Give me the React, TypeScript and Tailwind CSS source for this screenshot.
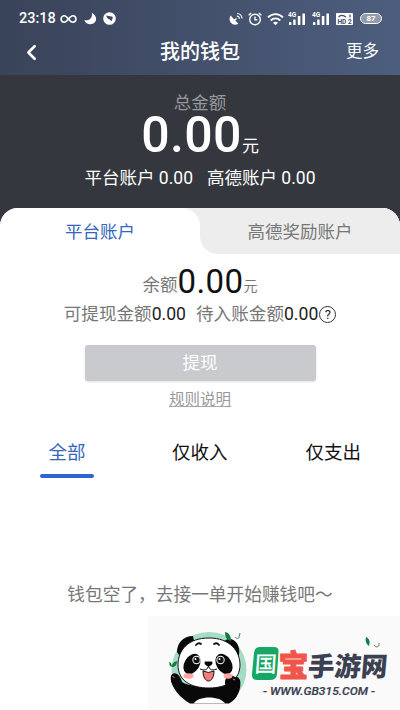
import { ChevronLeft } from 'lucide-react'

const cjk = "font-['Roboto','Noto_Sans_CJK_SC',sans-serif]"

function SignalBars() {
  return (
    <svg width="18" height="14" viewBox="0 0 18 14" fill="#fff">
      <text x="0" y="5.2" fontSize="6.5" fontWeight="700">4G</text>
      <rect x="1" y="10" width="2.4" height="3" rx="0.5" />
      <rect x="5.2" y="7.5" width="2.4" height="5.5" rx="0.5" />
      <rect x="9.8" y="4" width="2.6" height="9" rx="0.5" />
      <rect x="14.4" y="1.5" width="2.6" height="11.5" rx="0.5" />
    </svg>
  )
}

function StatusBar() {
  return (
    <div className="flex h-[35px] items-center pl-[19px] pr-[18px] pt-0.5 text-white">
      <span className="w-[37px] pt-px text-[14.5px] font-medium leading-none">23:18</span>
      <svg className="ml-1" width="18" height="12" viewBox="0 0 18 12" fill="none" stroke="#fff" strokeWidth="1.6">
        <path d="M8.5 6C6.7 3.7 5.8 2.8 4.3 2.8a3.2 3.2 0 0 0 0 6.4C7.4 9.2 9.6 2.8 12.7 2.8a3.2 3.2 0 0 1 0 6.4C11.2 9.2 10.3 8.3 8.5 6" />
      </svg>
      <svg className="ml-[6px]" width="13" height="13" viewBox="0 0 13 13" fill="#fff">
        <path d="M7.8.7c7 4.2 4.7 11.5-1.3 11.5C3.5 12.2 1.3 10.6.3 8.2 5.5 9 8.8 5.8 7.8.7z" />
      </svg>
      <svg className="ml-[6px]" width="13" height="13" viewBox="0 0 13 13">
        <circle cx="6.5" cy="6.5" r="6.3" fill="#fff" />
        <path d="M3 3.5l6.8 1.2-.5 2.8-.8 1.8-1.5-1.5-2.3-1.3z" fill="#3d465c" />
      </svg>
      <svg className="ml-auto" width="14" height="14" viewBox="0 0 14 14" fill="#fff">
        <path d="M1.7 3.5C-.8 7 1 12.5 6 12.7c1.5 0 2.5-.4 3.3-1.2L6.3 8.7 8 7 7 6 5.2 7.4z" />
        <path d="M7.8 4a3 3 0 0 1 2.7 2.8M8 1.5a5.2 5.2 0 0 1 5 5" fill="none" stroke="#fff" strokeWidth="1.2" />
      </svg>
      <svg className="ml-[5px]" width="14" height="14" viewBox="0 0 14 14" fill="none" stroke="#fff" strokeWidth="1.4">
        <circle cx="7" cy="7.5" r="5.3" />
        <path d="M7 4.5v3.3h2.3M.6 3.3l2.6-2.2M13.4 3.3l-2.6-2.2" />
      </svg>
      <svg className="ml-[5px]" width="17" height="14" viewBox="0 0 17 14" fill="none" stroke="#fff" strokeWidth="1.9">
        <path d="M1 5.3c4.3-4.3 10.7-4.3 15 0M3.7 8.5c2.8-2.8 6.8-2.8 9.6 0" />
        <path d="M6 10.8c1.4-1.3 3.6-1.3 5 0L8.5 13.2z" fill="#fff" stroke="none" />
      </svg>
      <div className="ml-1 flex gap-[6px]">
        <SignalBars />
        <SignalBars />
      </div>
      <svg className="ml-[6px]" width="17" height="12" viewBox="0 0 17 12">
        <rect width="17" height="12" rx="1" fill="#fff" />
        <path d="M2.5 4.2c1.5-2.5 5-2.5 7.5 0M14 1.5v3" fill="none" stroke="#414b63" strokeWidth="1.2" />
        <text x="1.5" y="10.8" fontSize="6.5" fontWeight="700" fill="#414b63">HD 2</text>
      </svg>
      <div className="ml-[7px] flex h-[11px] w-[22px] items-center justify-center rounded-full border border-white bg-[#929bac] text-[8px] font-bold leading-none">87</div>
    </div>
  )
}

function Panda() {
  return (
    <svg width="80" height="76" viewBox="0 0 80 76">
      <defs>
        <clipPath id="badge">
          <path d="M0 0h80v48C78 58 70 68 61 73.5H22C12 68 4 58 2 48z" />
        </clipPath>
      </defs>
      <g clipPath="url(#badge)">
        <circle cx="41" cy="39.5" r="37.5" fill="#a5dcc5" />
        <path d="M9 22C9 13 15 6 25 6l1 5-13 17z" fill="#090909" />
        <path d="M56 11c8-6 17 2 15 14l-3 3-14-14z" fill="#090909" />
        <path d="M3 46c2-5 9-3 11 6 9 6 41 6 44 2 1-9 10-11 14-4 2 10-4 19-10 25H20C9 67 1 56 3 46z" fill="#090909" />
        <path d="M25 75c3-10 29-10 33 0z" fill="#fff" />
        <path d="M41 8c21 0 31 13 31 27S60 58 41 58 10 50 10 35 20 8 41 8z" fill="#fff" stroke="#111" strokeWidth="1" />
        <path d="M57 53c0-7 5-10 10-6 6 3 4 11 0 15l-9-2z" fill="#090909" />
        <ellipse cx="24" cy="34" rx="7.5" ry="11" fill="#090909" transform="rotate(32 24 34)" />
        <ellipse cx="56" cy="34" rx="7.5" ry="11" fill="#090909" transform="rotate(-32 56 34)" />
        <circle cx="28.5" cy="30" r="4.2" fill="#fff" />
        <circle cx="52.5" cy="30" r="4.2" fill="#fff" />
        <circle cx="28.5" cy="30" r="3.2" fill="#111" />
        <circle cx="52.5" cy="30" r="3.2" fill="#111" />
        <circle cx="27.5" cy="29" r="1" fill="#fff" />
        <circle cx="51.5" cy="29" r="1" fill="#fff" />
        <path d="M28 15q2.500-3 5-1M46 14q3-2 5 1" fill="none" stroke="#111" strokeWidth="1.8" strokeLinecap="round" />
        <ellipse cx="20.5" cy="46" rx="5" ry="2.8" fill="#ffa6a0" />
        <ellipse cx="60" cy="46" rx="4.5" ry="2.8" fill="#ffa6a0" />
        <path d="M35 41q5.500 3 11 0c0 6-2.500 10-5.500 10S35 47 35 41z" fill="#f47d79" stroke="#111" strokeWidth="1" />
        <path d="M32 39q7 3 8.500-3 1.500 6 8.500 3" fill="none" stroke="#111" strokeWidth="1" />
        <path d="M37 31.500h7q2 3-3.500 5-5.500-2-3.500-5z" fill="#090909" />
        <path d="M4.500 46.500l2 1M65 49l2 1" stroke="#f47d79" strokeWidth="1" />
        <path d="M0 31c3 1 4 3 4 6-3-1-4-3-4-6zm4 6c0-4 2-5 5-6 0 4-2 6-5 6zM57 2c5 1 6 5 6 9-5-1-6-5-6-9z" fill="#127b45" />
        <path d="M67 7c2 2 4 2 4 0l1-4" fill="none" stroke="#477f65" strokeWidth="1" />
      </g>
    </svg>
  )
}

function Watermark() {
  return (
    <div className="absolute bottom-0 left-[148px] flex h-[94px] w-[252px] bg-[#fafafa]">
      <div className="ml-[20px] mt-[14px]">
        <Panda />
      </div>
      <svg className="ml-[2px] mt-[18px]" width="150" height="76" viewBox="0 0 150 76">
        <path d="M9.500 13H24q5 0 4.500 5L27 40q-.5 6-7 6H7q-5.500 0-5-6l2-21q.5-6 5.500-6z" fill="#16a765" />
        <g fontWeight="900">
          <text x="5" y="38" fontSize="22" fill="#fff" fontWeight="500" transform="skewX(-4) translate(2 0)">国</text>
          <text x="28.5" y="42" fontSize="30" fill="#ef5549" stroke="#ef5549" strokeWidth="0.8" strokeLinejoin="round">宝</text>
          <text x="61" y="42" fontSize="26.5" fill="#3b4052" transform="skewX(-5)">手游网</text>
        </g>
        <text x="13" y="61" textLength="112" lengthAdjust="spacingAndGlyphs" fontSize="11.5" fontWeight="500" fontStyle="italic" fill="#3b4052" stroke="#3b4052" strokeWidth="0.2">- WWW.GB315.COM -</text>
        <path d="M116 3c4 2 4 5 3 9-3-2-4-5-3-9z" fill="#127b45" />
        <path d="M124 11q1 2 3 2 3-1 2-4" fill="none" stroke="#667b73" strokeWidth="1" />
      </svg>
    </div>
  )
}

export default function App() {
  return (
    <div className={`relative h-[710px] w-[400px] overflow-hidden bg-white ${cjk}`}>
      <header className="h-[75px] bg-linear-to-r from-[#394359] to-[#4d5e7e]">
        <StatusBar />
        <div className="grid h-[34px] grid-cols-3 items-center text-white">
          <ChevronLeft className="ml-[19px]" size={25} strokeWidth={2.5} />
          <h1 className="text-center text-[20px] font-medium">我的钱包</h1>
          <span className="pr-[21px] text-right text-[16.5px]">更多</span>
        </div>
      </header>

      <section className="flex h-[133px] flex-col items-center bg-[#34373d] text-white">
        <div className="mt-[18px] text-[17.5px] leading-5 text-[#97999e]">总金额</div>
        <div className="mt-px flex h-[43px] items-baseline leading-[43px]">
          <span className="text-[50px] font-medium tracking-[0.4px]">0.00</span>
          <span className="text-[17px]">元</span>
        </div>
        <div className="mt-[9px] flex gap-[14px] text-[17.5px] leading-6">
          <span>平台账户 0.00</span>
          <span>高德账户 0.00</span>
        </div>
      </section>

      <div className="bg-[#34373d]">
        <div className="grid h-[46px] grid-cols-2 overflow-hidden rounded-t-[18px] bg-[#ededed] text-center text-[17.5px]">
          <div className="rounded-tr-[18px] bg-white pt-px leading-[47px] text-[#3466be]">平台账户</div>
          <div className="bg-white">
            <div className="h-[46px] rounded-bl-[18px] bg-[#ededed] pt-px leading-[47px] text-[#777]">高德奖励账户</div>
          </div>
        </div>
      </div>

      <main className="flex flex-col items-center text-[#777]">
        <div className="mt-[9px] flex h-[38px] items-baseline leading-[38px]">
          <span className="-translate-y-0.5 text-[17.5px]">余额</span>
          <span className="text-[33px] tracking-[0.4px] text-[#111]">0.00</span>
          <span className="-translate-y-0.5 text-[14px]">元</span>
        </div>
        <div className="mt-px flex h-6 items-center text-[17.6px]">
          可提现金额<span className="text-[#222]">0.00</span>
          <span className="ml-[10px]">待入账金额</span><span className="text-[#222]">0.00</span>
          <span className="ml-px flex size-[17px] items-center justify-center rounded-full border border-[#333] text-[13px] leading-none text-[#222]">?</span>
        </div>
        <button className="mt-[19px] h-9 w-[231px] rounded-[3px] bg-[#c8cace] text-[17.5px] text-white shadow">提现</button>
        <a className="mt-[10px] text-[15.5px] leading-[18px] text-[#999] underline decoration-[#aaa] decoration-1 underline-offset-[1px]">规则说明</a>
        <div className="mt-[31px] flex h-[38px] w-full justify-between pl-[40px] pr-[39px] text-[18.5px] leading-[27px] text-[#111]">
          <div className="flex w-[54px] flex-col justify-between text-center text-[#3466be]">
            全部
            <div className="h-1 rounded-full bg-[#2d64d8]" />
          </div>
          <div>仅收入</div>
          <div>仅支出</div>
        </div>
        <p className="mt-[103px] text-[17.7px] leading-7">钱包空了，去接一单开始赚钱吧～</p>
      </main>
      <Watermark />
    </div>
  )
}
